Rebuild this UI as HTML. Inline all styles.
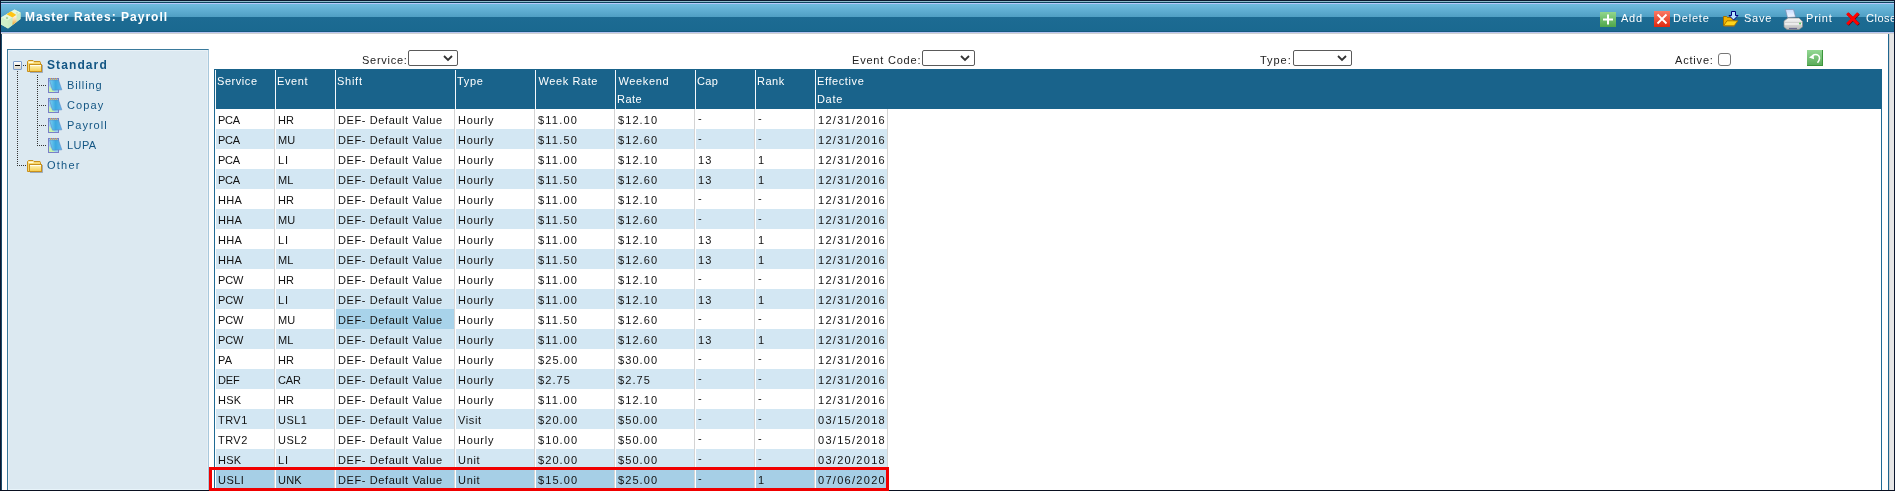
<!DOCTYPE html><html><head><meta charset="utf-8"><style>
*{margin:0;padding:0;box-sizing:border-box}
html,body{width:1895px;height:491px;overflow:hidden;background:#fff;position:relative;font-family:"Liberation Sans",sans-serif}
.a{position:absolute;white-space:nowrap}
#title{left:0;top:0;width:1895px;height:34px;
 background:linear-gradient(to bottom,#0c1830 0,#0c1830 1px,#8cbccc 1px,#8cbccc 2px,#0e4460 2px,#0e4460 3px,#b8c8fc 3px,#b8c8fc 4px,#70bce0 4px,#4f9fc4 17px,#1d6b93 17px,#1a6990 31px,#155a80 31px,#155a80 32px,#b4c4f0 32px,#b4c4f0 33px,#d0d0d0 33px,#d0d0d0 34px)}
#ttl{left:25px;top:10px;font-weight:bold;font-size:12px;letter-spacing:1.0px;color:#fff;line-height:14px}
.tb{top:12px;font-size:11px;color:#fff;line-height:12px}
.lbl{font-size:11px;color:#222;line-height:12px}
.sel{height:16px;border:1px solid #5a5a5a;border-radius:2px;background:#fff}
.tr{font-size:11px;color:#135684;line-height:12px}
.hd{font-size:11px;color:#fff;line-height:12px}
.c{font-size:11px;color:#111;line-height:12px}
.dv{background:repeating-linear-gradient(to bottom,#333 0,#333 1px,transparent 1px,transparent 2px)}
.dh{background:repeating-linear-gradient(to right,#333 0,#333 1px,transparent 1px,transparent 2px)}
</style></head><body>
<div class="a" id="title"></div>
<div class="a" style="left:0;top:0;width:1px;height:491px;background:#0c1830"></div>
<div class="a" style="left:1px;top:34px;width:1px;height:457px;background:#1a4a68"></div>
<div class="a" style="left:1894px;top:0;width:1px;height:491px;background:#0c1830"></div>
<div class="a" style="left:1888px;top:34px;width:1px;height:457px;background:#1f6690"></div>
<div class="a" style="left:1889px;top:34px;width:5px;height:457px;background:#e6e6e6;border-left:1px solid #d0d0d0"></div>
<div class="a" style="left:0;top:490px;width:1895px;height:1px;background:#0a1020"></div>
<svg class="a" style="left:0px;top:8px" width="22" height="22" viewBox="0 0 22 22"><defs><linearGradient id="gm" x1="0" y1="0" x2="0" y2="1"><stop offset="0" stop-color="#fff8f0"/><stop offset="0.5" stop-color="#f8d8a0"/><stop offset="1" stop-color="#e8a020"/></linearGradient></defs>
<path d="M1 9.5 L14.5 1.5 L20.5 4.5 L20.5 11 L8 20.5 L1 16.5Z" fill="#d4f0cc"/>
<path d="M1 9.5 L14.5 1.5 L20.5 4.5 L7.5 12.5Z" fill="#e4f8de"/>
<path d="M1 9.5 L7.5 12.5 L8 20.5 L1 16.5Z" fill="#d0f0c8"/>
<path d="M7.5 12.5 L20.5 4.5 L20.5 11 L8 20.5Z" fill="#ccecc4"/>
<path d="M6.5 6.3 L11 3.6 L16.5 7 L12.5 9.4Z" fill="#ffc414"/>
<path d="M12.5 9.4 L16.5 7 L16.5 14 L12.5 17.1Z" fill="url(#gm)"/>
<circle cx="7" cy="10" r="1.2" fill="#a8d4a0"/>
<circle cx="17" cy="4.8" r="0.9" fill="#c0e0c0"/>
</svg>
<svg class="a" style="left:1600px;top:12px" width="16" height="15" viewBox="0 0 16 15"><defs><linearGradient id="ga" x1="0" y1="0" x2="0" y2="1"><stop offset="0" stop-color="#92d68c"/><stop offset="1" stop-color="#4ea64a"/></linearGradient></defs><rect x="0" y="0" width="16" height="15" fill="url(#ga)"/><rect x="3" y="6.5" width="10" height="2" fill="#fff"/><rect x="7" y="2.5" width="2" height="10" fill="#fff"/></svg>
<svg class="a" style="left:1654px;top:11px" width="16" height="16" viewBox="0 0 16 16"><defs><linearGradient id="gd" x1="0" y1="0" x2="0" y2="1"><stop offset="0" stop-color="#fa7a66"/><stop offset="1" stop-color="#e0280e"/></linearGradient></defs><rect x="0" y="0" width="16" height="16" fill="url(#gd)"/><path d="M3.5 3.5 L12.5 12.5 M12.5 3.5 L3.5 12.5" stroke="#fff" stroke-width="1.8"/></svg>
<svg class="a" style="left:1722px;top:10px" width="18" height="18" viewBox="0 0 18 18"><path d="M1.5 6.5 L4.5 6.5 L5.5 7.5 L11.5 7.5 L11.5 15.5 L1.5 15.5Z" fill="#f0b000" stroke="#a07000" stroke-width="1"/><path d="M1.5 15.8 L5 10.8 L15.8 10.8 L12.2 15.8Z" fill="#ffd41a" stroke="#a07000" stroke-width="0.9"/><path d="M2.5 16.5 L12.5 16.5" stroke="#8a6a40" stroke-opacity="0.6"/><path d="M9.5 1.5 L13.5 1.5 L13.5 5.5 L16 5.5 L11.5 10 L7 5.5 L9.5 5.5 Z" fill="#b8e2ff" stroke="#000080" stroke-width="1"/></svg>
<svg class="a" style="left:1783px;top:8px" width="20" height="22" viewBox="0 0 20 22"><defs><linearGradient id="gp" x1="0" y1="0" x2="0" y2="1"><stop offset="0" stop-color="#fafafa"/><stop offset="1" stop-color="#b8b8b8"/></linearGradient><linearGradient id="gpp" x1="0" y1="0" x2="0" y2="1"><stop offset="0" stop-color="#c8dcff"/><stop offset="1" stop-color="#f4f8ff"/></linearGradient></defs><path d="M2.5 1.5 L10.5 1.5 L12.5 9 L4.5 9.5Z" fill="url(#gpp)" stroke="#8088a8" stroke-width="0.6"/><path d="M1 13 L5 10 L16 10 L19.5 13.5 L19.5 19 L16 21.5 L4 21.5 L1 19Z" fill="url(#gp)" stroke="#8a8a8a" stroke-width="0.7"/><path d="M1.5 14.5 L19 14.5" stroke="#d0d0d0" stroke-width="1"/><path d="M1.5 16 L19 16" stroke="#ffffff" stroke-width="1"/><path d="M6 20.5 L14 20.5" stroke="#6a6a90" stroke-width="1.2"/><circle cx="17" cy="15.5" r="0.9" fill="#40c040"/></svg>
<svg class="a" style="left:1845px;top:11px" width="17" height="17" viewBox="0 0 17 17"><path d="M2.8 2.8 L13.8 13.8 M13.8 2.8 L2.8 13.8" stroke="#500000" stroke-opacity="0.8" stroke-width="3"/><path d="M2.2 2.2 L13.2 13.2 M13.2 2.2 L2.2 13.2" stroke="#ff0000" stroke-width="3"/></svg>
<div class="a" style="left:7px;top:49px;width:202px;height:441px;background:#dce9f1;border-top:1px solid #3a7a9c;border-left:1px solid #3a7a9c;border-right:1px solid #a8c8dc"></div>
<div class="a" style="left:8px;top:50px;width:200px;height:440px;border-top:1px solid #e8f1f7;border-left:1px solid #e8f1f7;border-bottom:1px solid #e8f4fa;border-right:1px solid #e6eef4"></div>
<div class="a dv" style="left:17px;top:71px;width:1px;height:95px"></div>
<div class="a dh" style="left:17px;top:165px;width:10px;height:1px"></div>
<div class="a dh" style="left:23px;top:65px;width:5px;height:1px"></div>
<div class="a dv" style="left:37px;top:75px;width:1px;height:71px"></div>
<div class="a dh" style="left:37px;top:85px;width:10px;height:1px"></div>
<div class="a dh" style="left:37px;top:105px;width:10px;height:1px"></div>
<div class="a dh" style="left:37px;top:125px;width:10px;height:1px"></div>
<div class="a dh" style="left:37px;top:145px;width:10px;height:1px"></div>
<div class="a" style="left:13px;top:61px;width:9px;height:9px;border:1px solid #7b9ccb;border-radius:1px;background:linear-gradient(#fff,#d8d4c8)"></div>
<div class="a" style="left:15px;top:65px;width:5px;height:1px;background:#000"></div>
<svg class="a" style="left:27px;top:59px" width="17" height="15" viewBox="0 0 17 15"><defs><linearGradient id="gf59" x1="0" y1="0" x2="0" y2="1"><stop offset="0" stop-color="#fff8c8"/><stop offset="1" stop-color="#f6cc48"/></linearGradient></defs><path d="M15.5 6 L15.5 13.5 L3 13.5" stroke="#6a7890" stroke-opacity="0.55" fill="none"/><path d="M0.5 2.5 L1.5 1.5 L6 1.5 L7 2.5 L13 2.5 L13.5 3.5 L13.5 12.5 L0.5 12.5 Z" fill="#f8d870" stroke="#c8901c" stroke-width="1"/><rect x="1.5" y="2.5" width="5" height="1.5" fill="#fffbe0"/><rect x="2.5" y="5.5" width="12" height="7" fill="url(#gf59)" stroke="#c8901c" stroke-width="1"/><rect x="3" y="6" width="11" height="1" fill="#fffff0"/></svg>
<svg class="a" style="left:47px;top:77px" width="16" height="17" viewBox="0 0 16 17"><defs><linearGradient id="gb78" x1="0" y1="0" x2="1" y2="0"><stop offset="0" stop-color="#7ad0f0"/><stop offset="0.5" stop-color="#3ca8e0"/><stop offset="1" stop-color="#60b8ec"/></linearGradient></defs><rect x="1.5" y="1.5" width="10" height="14" fill="#9cd4f0" stroke="#7a80c8" stroke-width="1"/><path d="M2 9 L2 15 L8 15Z" fill="#c8f4b0"/><path d="M2.5 3 L11.5 3 L14.8 12.8 L5.5 13.2Z" fill="url(#gb78)" stroke="#5c88c8" stroke-width="0.6"/><rect x="3" y="1" width="1" height="2" fill="#c8a868"/><rect x="5" y="1" width="1" height="2" fill="#c8a868"/><rect x="7" y="1" width="1" height="2" fill="#c8a868"/><rect x="9" y="1" width="1" height="2" fill="#c8a868"/></svg>
<svg class="a" style="left:47px;top:97px" width="16" height="17" viewBox="0 0 16 17"><defs><linearGradient id="gb98" x1="0" y1="0" x2="1" y2="0"><stop offset="0" stop-color="#7ad0f0"/><stop offset="0.5" stop-color="#3ca8e0"/><stop offset="1" stop-color="#60b8ec"/></linearGradient></defs><rect x="1.5" y="1.5" width="10" height="14" fill="#9cd4f0" stroke="#7a80c8" stroke-width="1"/><path d="M2 9 L2 15 L8 15Z" fill="#c8f4b0"/><path d="M2.5 3 L11.5 3 L14.8 12.8 L5.5 13.2Z" fill="url(#gb98)" stroke="#5c88c8" stroke-width="0.6"/><rect x="3" y="1" width="1" height="2" fill="#c8a868"/><rect x="5" y="1" width="1" height="2" fill="#c8a868"/><rect x="7" y="1" width="1" height="2" fill="#c8a868"/><rect x="9" y="1" width="1" height="2" fill="#c8a868"/></svg>
<svg class="a" style="left:47px;top:117px" width="16" height="17" viewBox="0 0 16 17"><defs><linearGradient id="gb118" x1="0" y1="0" x2="1" y2="0"><stop offset="0" stop-color="#7ad0f0"/><stop offset="0.5" stop-color="#3ca8e0"/><stop offset="1" stop-color="#60b8ec"/></linearGradient></defs><rect x="1.5" y="1.5" width="10" height="14" fill="#9cd4f0" stroke="#7a80c8" stroke-width="1"/><path d="M2 9 L2 15 L8 15Z" fill="#c8f4b0"/><path d="M2.5 3 L11.5 3 L14.8 12.8 L5.5 13.2Z" fill="url(#gb118)" stroke="#5c88c8" stroke-width="0.6"/><rect x="3" y="1" width="1" height="2" fill="#c8a868"/><rect x="5" y="1" width="1" height="2" fill="#c8a868"/><rect x="7" y="1" width="1" height="2" fill="#c8a868"/><rect x="9" y="1" width="1" height="2" fill="#c8a868"/></svg>
<svg class="a" style="left:47px;top:137px" width="16" height="17" viewBox="0 0 16 17"><defs><linearGradient id="gb138" x1="0" y1="0" x2="1" y2="0"><stop offset="0" stop-color="#7ad0f0"/><stop offset="0.5" stop-color="#3ca8e0"/><stop offset="1" stop-color="#60b8ec"/></linearGradient></defs><rect x="1.5" y="1.5" width="10" height="14" fill="#9cd4f0" stroke="#7a80c8" stroke-width="1"/><path d="M2 9 L2 15 L8 15Z" fill="#c8f4b0"/><path d="M2.5 3 L11.5 3 L14.8 12.8 L5.5 13.2Z" fill="url(#gb138)" stroke="#5c88c8" stroke-width="0.6"/><rect x="3" y="1" width="1" height="2" fill="#c8a868"/><rect x="5" y="1" width="1" height="2" fill="#c8a868"/><rect x="7" y="1" width="1" height="2" fill="#c8a868"/><rect x="9" y="1" width="1" height="2" fill="#c8a868"/></svg>
<svg class="a" style="left:27px;top:159px" width="17" height="15" viewBox="0 0 17 15"><defs><linearGradient id="gf159" x1="0" y1="0" x2="0" y2="1"><stop offset="0" stop-color="#fff8c8"/><stop offset="1" stop-color="#f6cc48"/></linearGradient></defs><path d="M15.5 6 L15.5 13.5 L3 13.5" stroke="#6a7890" stroke-opacity="0.55" fill="none"/><path d="M0.5 2.5 L1.5 1.5 L6 1.5 L7 2.5 L13 2.5 L13.5 3.5 L13.5 12.5 L0.5 12.5 Z" fill="#f8d870" stroke="#c8901c" stroke-width="1"/><rect x="1.5" y="2.5" width="5" height="1.5" fill="#fffbe0"/><rect x="2.5" y="5.5" width="12" height="7" fill="url(#gf159)" stroke="#c8901c" stroke-width="1"/><rect x="3" y="6" width="11" height="1" fill="#fffff0"/></svg>
<div class="a sel" style="left:408px;top:50px;width:50px"><svg class="a" style="right:4px;top:4px" width="10" height="7" viewBox="0 0 10 7"><path d="M1 1 L5 5 L9 1" stroke="#333" stroke-width="1.8" fill="none"/></svg></div>
<div class="a sel" style="left:922px;top:50px;width:53px"><svg class="a" style="right:4px;top:4px" width="10" height="7" viewBox="0 0 10 7"><path d="M1 1 L5 5 L9 1" stroke="#333" stroke-width="1.8" fill="none"/></svg></div>
<div class="a sel" style="left:1293px;top:50px;width:59px"><svg class="a" style="right:4px;top:4px" width="10" height="7" viewBox="0 0 10 7"><path d="M1 1 L5 5 L9 1" stroke="#333" stroke-width="1.8" fill="none"/></svg></div>
<div class="a" style="left:1718px;top:53px;width:13px;height:13px;border:1px solid #767676;border-radius:3px;background:#fff"></div>
<svg class="a" style="left:1807px;top:50px" width="16" height="16" viewBox="0 0 16 16"><defs><linearGradient id="gr" x1="0" y1="0" x2="0" y2="1"><stop offset="0" stop-color="#94d894"/><stop offset="1" stop-color="#58aa58"/></linearGradient></defs><rect width="16" height="16" fill="url(#gr)"/><path d="M15.5 0 L15.5 16 M0 15.5 L16 15.5" stroke="#3c963c" stroke-width="1"/><path d="M5.5 5.8 Q8.5 3.5 11.5 5.5 Q14 8.5 10.5 12.8" stroke="#fff" stroke-width="1.5" fill="none"/><path d="M2 7.5 L6.5 4.2 L7 9.2Z" fill="#fff"/></svg>
<div class="a" style="left:214px;top:69px;width:1668px;height:421px;border-left:1px solid #1f6a94;border-right:1px solid #1f6a94;background:#fff"></div>
<div class="a" style="left:214px;top:69px;width:1668px;height:40px;background:#19638b"></div>
<div class="a" style="left:215px;top:70px;width:1px;height:39px;background:#f4f8fb"></div>
<div class="a" style="left:275px;top:70px;width:1px;height:39px;background:#f4f8fb"></div>
<div class="a" style="left:335px;top:70px;width:1px;height:39px;background:#f4f8fb"></div>
<div class="a" style="left:455px;top:70px;width:1px;height:39px;background:#f4f8fb"></div>
<div class="a" style="left:535px;top:70px;width:1px;height:39px;background:#f4f8fb"></div>
<div class="a" style="left:615px;top:70px;width:1px;height:39px;background:#f4f8fb"></div>
<div class="a" style="left:695px;top:70px;width:1px;height:39px;background:#f4f8fb"></div>
<div class="a" style="left:755px;top:70px;width:1px;height:39px;background:#f4f8fb"></div>
<div class="a" style="left:815px;top:70px;width:1px;height:39px;background:#f4f8fb"></div>
<div class="a" style="left:216px;top:109px;width:58px;height:20px;background:#ffffff"></div>
<div class="a" style="left:274px;top:109px;width:1px;height:20px;background:#d4d4d4"></div>
<div class="a" style="left:276px;top:109px;width:58px;height:20px;background:#ffffff"></div>
<div class="a" style="left:334px;top:109px;width:1px;height:20px;background:#d4d4d4"></div>
<div class="a" style="left:336px;top:109px;width:118px;height:20px;background:#ffffff"></div>
<div class="a" style="left:454px;top:109px;width:1px;height:20px;background:#d4d4d4"></div>
<div class="a" style="left:456px;top:109px;width:78px;height:20px;background:#ffffff"></div>
<div class="a" style="left:534px;top:109px;width:1px;height:20px;background:#d4d4d4"></div>
<div class="a" style="left:536px;top:109px;width:78px;height:20px;background:#ffffff"></div>
<div class="a" style="left:614px;top:109px;width:1px;height:20px;background:#d4d4d4"></div>
<div class="a" style="left:616px;top:109px;width:78px;height:20px;background:#ffffff"></div>
<div class="a" style="left:694px;top:109px;width:1px;height:20px;background:#d4d4d4"></div>
<div class="a" style="left:696px;top:109px;width:58px;height:20px;background:#ffffff"></div>
<div class="a" style="left:754px;top:109px;width:1px;height:20px;background:#d4d4d4"></div>
<div class="a" style="left:756px;top:109px;width:58px;height:20px;background:#ffffff"></div>
<div class="a" style="left:814px;top:109px;width:1px;height:20px;background:#d4d4d4"></div>
<div class="a" style="left:816px;top:109px;width:71px;height:20px;background:#ffffff"></div>
<div class="a" style="left:887px;top:109px;width:1px;height:20px;background:#d4d4d4"></div>
<div class="a" style="left:216px;top:129px;width:58px;height:20px;background:#d3e7f3"></div>
<div class="a" style="left:274px;top:129px;width:1px;height:20px;background:#d4d4d4"></div>
<div class="a" style="left:276px;top:129px;width:58px;height:20px;background:#d3e7f3"></div>
<div class="a" style="left:334px;top:129px;width:1px;height:20px;background:#d4d4d4"></div>
<div class="a" style="left:336px;top:129px;width:118px;height:20px;background:#d3e7f3"></div>
<div class="a" style="left:454px;top:129px;width:1px;height:20px;background:#d4d4d4"></div>
<div class="a" style="left:456px;top:129px;width:78px;height:20px;background:#d3e7f3"></div>
<div class="a" style="left:534px;top:129px;width:1px;height:20px;background:#d4d4d4"></div>
<div class="a" style="left:536px;top:129px;width:78px;height:20px;background:#d3e7f3"></div>
<div class="a" style="left:614px;top:129px;width:1px;height:20px;background:#d4d4d4"></div>
<div class="a" style="left:616px;top:129px;width:78px;height:20px;background:#d3e7f3"></div>
<div class="a" style="left:694px;top:129px;width:1px;height:20px;background:#d4d4d4"></div>
<div class="a" style="left:696px;top:129px;width:58px;height:20px;background:#d3e7f3"></div>
<div class="a" style="left:754px;top:129px;width:1px;height:20px;background:#d4d4d4"></div>
<div class="a" style="left:756px;top:129px;width:58px;height:20px;background:#d3e7f3"></div>
<div class="a" style="left:814px;top:129px;width:1px;height:20px;background:#d4d4d4"></div>
<div class="a" style="left:816px;top:129px;width:71px;height:20px;background:#d3e7f3"></div>
<div class="a" style="left:887px;top:129px;width:1px;height:20px;background:#d4d4d4"></div>
<div class="a" style="left:216px;top:149px;width:58px;height:20px;background:#ffffff"></div>
<div class="a" style="left:274px;top:149px;width:1px;height:20px;background:#d4d4d4"></div>
<div class="a" style="left:276px;top:149px;width:58px;height:20px;background:#ffffff"></div>
<div class="a" style="left:334px;top:149px;width:1px;height:20px;background:#d4d4d4"></div>
<div class="a" style="left:336px;top:149px;width:118px;height:20px;background:#ffffff"></div>
<div class="a" style="left:454px;top:149px;width:1px;height:20px;background:#d4d4d4"></div>
<div class="a" style="left:456px;top:149px;width:78px;height:20px;background:#ffffff"></div>
<div class="a" style="left:534px;top:149px;width:1px;height:20px;background:#d4d4d4"></div>
<div class="a" style="left:536px;top:149px;width:78px;height:20px;background:#ffffff"></div>
<div class="a" style="left:614px;top:149px;width:1px;height:20px;background:#d4d4d4"></div>
<div class="a" style="left:616px;top:149px;width:78px;height:20px;background:#ffffff"></div>
<div class="a" style="left:694px;top:149px;width:1px;height:20px;background:#d4d4d4"></div>
<div class="a" style="left:696px;top:149px;width:58px;height:20px;background:#ffffff"></div>
<div class="a" style="left:754px;top:149px;width:1px;height:20px;background:#d4d4d4"></div>
<div class="a" style="left:756px;top:149px;width:58px;height:20px;background:#ffffff"></div>
<div class="a" style="left:814px;top:149px;width:1px;height:20px;background:#d4d4d4"></div>
<div class="a" style="left:816px;top:149px;width:71px;height:20px;background:#ffffff"></div>
<div class="a" style="left:887px;top:149px;width:1px;height:20px;background:#d4d4d4"></div>
<div class="a" style="left:216px;top:169px;width:58px;height:20px;background:#d3e7f3"></div>
<div class="a" style="left:274px;top:169px;width:1px;height:20px;background:#d4d4d4"></div>
<div class="a" style="left:276px;top:169px;width:58px;height:20px;background:#d3e7f3"></div>
<div class="a" style="left:334px;top:169px;width:1px;height:20px;background:#d4d4d4"></div>
<div class="a" style="left:336px;top:169px;width:118px;height:20px;background:#d3e7f3"></div>
<div class="a" style="left:454px;top:169px;width:1px;height:20px;background:#d4d4d4"></div>
<div class="a" style="left:456px;top:169px;width:78px;height:20px;background:#d3e7f3"></div>
<div class="a" style="left:534px;top:169px;width:1px;height:20px;background:#d4d4d4"></div>
<div class="a" style="left:536px;top:169px;width:78px;height:20px;background:#d3e7f3"></div>
<div class="a" style="left:614px;top:169px;width:1px;height:20px;background:#d4d4d4"></div>
<div class="a" style="left:616px;top:169px;width:78px;height:20px;background:#d3e7f3"></div>
<div class="a" style="left:694px;top:169px;width:1px;height:20px;background:#d4d4d4"></div>
<div class="a" style="left:696px;top:169px;width:58px;height:20px;background:#d3e7f3"></div>
<div class="a" style="left:754px;top:169px;width:1px;height:20px;background:#d4d4d4"></div>
<div class="a" style="left:756px;top:169px;width:58px;height:20px;background:#d3e7f3"></div>
<div class="a" style="left:814px;top:169px;width:1px;height:20px;background:#d4d4d4"></div>
<div class="a" style="left:816px;top:169px;width:71px;height:20px;background:#d3e7f3"></div>
<div class="a" style="left:887px;top:169px;width:1px;height:20px;background:#d4d4d4"></div>
<div class="a" style="left:216px;top:189px;width:58px;height:20px;background:#ffffff"></div>
<div class="a" style="left:274px;top:189px;width:1px;height:20px;background:#d4d4d4"></div>
<div class="a" style="left:276px;top:189px;width:58px;height:20px;background:#ffffff"></div>
<div class="a" style="left:334px;top:189px;width:1px;height:20px;background:#d4d4d4"></div>
<div class="a" style="left:336px;top:189px;width:118px;height:20px;background:#ffffff"></div>
<div class="a" style="left:454px;top:189px;width:1px;height:20px;background:#d4d4d4"></div>
<div class="a" style="left:456px;top:189px;width:78px;height:20px;background:#ffffff"></div>
<div class="a" style="left:534px;top:189px;width:1px;height:20px;background:#d4d4d4"></div>
<div class="a" style="left:536px;top:189px;width:78px;height:20px;background:#ffffff"></div>
<div class="a" style="left:614px;top:189px;width:1px;height:20px;background:#d4d4d4"></div>
<div class="a" style="left:616px;top:189px;width:78px;height:20px;background:#ffffff"></div>
<div class="a" style="left:694px;top:189px;width:1px;height:20px;background:#d4d4d4"></div>
<div class="a" style="left:696px;top:189px;width:58px;height:20px;background:#ffffff"></div>
<div class="a" style="left:754px;top:189px;width:1px;height:20px;background:#d4d4d4"></div>
<div class="a" style="left:756px;top:189px;width:58px;height:20px;background:#ffffff"></div>
<div class="a" style="left:814px;top:189px;width:1px;height:20px;background:#d4d4d4"></div>
<div class="a" style="left:816px;top:189px;width:71px;height:20px;background:#ffffff"></div>
<div class="a" style="left:887px;top:189px;width:1px;height:20px;background:#d4d4d4"></div>
<div class="a" style="left:216px;top:209px;width:58px;height:20px;background:#d3e7f3"></div>
<div class="a" style="left:274px;top:209px;width:1px;height:20px;background:#d4d4d4"></div>
<div class="a" style="left:276px;top:209px;width:58px;height:20px;background:#d3e7f3"></div>
<div class="a" style="left:334px;top:209px;width:1px;height:20px;background:#d4d4d4"></div>
<div class="a" style="left:336px;top:209px;width:118px;height:20px;background:#d3e7f3"></div>
<div class="a" style="left:454px;top:209px;width:1px;height:20px;background:#d4d4d4"></div>
<div class="a" style="left:456px;top:209px;width:78px;height:20px;background:#d3e7f3"></div>
<div class="a" style="left:534px;top:209px;width:1px;height:20px;background:#d4d4d4"></div>
<div class="a" style="left:536px;top:209px;width:78px;height:20px;background:#d3e7f3"></div>
<div class="a" style="left:614px;top:209px;width:1px;height:20px;background:#d4d4d4"></div>
<div class="a" style="left:616px;top:209px;width:78px;height:20px;background:#d3e7f3"></div>
<div class="a" style="left:694px;top:209px;width:1px;height:20px;background:#d4d4d4"></div>
<div class="a" style="left:696px;top:209px;width:58px;height:20px;background:#d3e7f3"></div>
<div class="a" style="left:754px;top:209px;width:1px;height:20px;background:#d4d4d4"></div>
<div class="a" style="left:756px;top:209px;width:58px;height:20px;background:#d3e7f3"></div>
<div class="a" style="left:814px;top:209px;width:1px;height:20px;background:#d4d4d4"></div>
<div class="a" style="left:816px;top:209px;width:71px;height:20px;background:#d3e7f3"></div>
<div class="a" style="left:887px;top:209px;width:1px;height:20px;background:#d4d4d4"></div>
<div class="a" style="left:216px;top:229px;width:58px;height:20px;background:#ffffff"></div>
<div class="a" style="left:274px;top:229px;width:1px;height:20px;background:#d4d4d4"></div>
<div class="a" style="left:276px;top:229px;width:58px;height:20px;background:#ffffff"></div>
<div class="a" style="left:334px;top:229px;width:1px;height:20px;background:#d4d4d4"></div>
<div class="a" style="left:336px;top:229px;width:118px;height:20px;background:#ffffff"></div>
<div class="a" style="left:454px;top:229px;width:1px;height:20px;background:#d4d4d4"></div>
<div class="a" style="left:456px;top:229px;width:78px;height:20px;background:#ffffff"></div>
<div class="a" style="left:534px;top:229px;width:1px;height:20px;background:#d4d4d4"></div>
<div class="a" style="left:536px;top:229px;width:78px;height:20px;background:#ffffff"></div>
<div class="a" style="left:614px;top:229px;width:1px;height:20px;background:#d4d4d4"></div>
<div class="a" style="left:616px;top:229px;width:78px;height:20px;background:#ffffff"></div>
<div class="a" style="left:694px;top:229px;width:1px;height:20px;background:#d4d4d4"></div>
<div class="a" style="left:696px;top:229px;width:58px;height:20px;background:#ffffff"></div>
<div class="a" style="left:754px;top:229px;width:1px;height:20px;background:#d4d4d4"></div>
<div class="a" style="left:756px;top:229px;width:58px;height:20px;background:#ffffff"></div>
<div class="a" style="left:814px;top:229px;width:1px;height:20px;background:#d4d4d4"></div>
<div class="a" style="left:816px;top:229px;width:71px;height:20px;background:#ffffff"></div>
<div class="a" style="left:887px;top:229px;width:1px;height:20px;background:#d4d4d4"></div>
<div class="a" style="left:216px;top:249px;width:58px;height:20px;background:#d3e7f3"></div>
<div class="a" style="left:274px;top:249px;width:1px;height:20px;background:#d4d4d4"></div>
<div class="a" style="left:276px;top:249px;width:58px;height:20px;background:#d3e7f3"></div>
<div class="a" style="left:334px;top:249px;width:1px;height:20px;background:#d4d4d4"></div>
<div class="a" style="left:336px;top:249px;width:118px;height:20px;background:#d3e7f3"></div>
<div class="a" style="left:454px;top:249px;width:1px;height:20px;background:#d4d4d4"></div>
<div class="a" style="left:456px;top:249px;width:78px;height:20px;background:#d3e7f3"></div>
<div class="a" style="left:534px;top:249px;width:1px;height:20px;background:#d4d4d4"></div>
<div class="a" style="left:536px;top:249px;width:78px;height:20px;background:#d3e7f3"></div>
<div class="a" style="left:614px;top:249px;width:1px;height:20px;background:#d4d4d4"></div>
<div class="a" style="left:616px;top:249px;width:78px;height:20px;background:#d3e7f3"></div>
<div class="a" style="left:694px;top:249px;width:1px;height:20px;background:#d4d4d4"></div>
<div class="a" style="left:696px;top:249px;width:58px;height:20px;background:#d3e7f3"></div>
<div class="a" style="left:754px;top:249px;width:1px;height:20px;background:#d4d4d4"></div>
<div class="a" style="left:756px;top:249px;width:58px;height:20px;background:#d3e7f3"></div>
<div class="a" style="left:814px;top:249px;width:1px;height:20px;background:#d4d4d4"></div>
<div class="a" style="left:816px;top:249px;width:71px;height:20px;background:#d3e7f3"></div>
<div class="a" style="left:887px;top:249px;width:1px;height:20px;background:#d4d4d4"></div>
<div class="a" style="left:216px;top:269px;width:58px;height:20px;background:#ffffff"></div>
<div class="a" style="left:274px;top:269px;width:1px;height:20px;background:#d4d4d4"></div>
<div class="a" style="left:276px;top:269px;width:58px;height:20px;background:#ffffff"></div>
<div class="a" style="left:334px;top:269px;width:1px;height:20px;background:#d4d4d4"></div>
<div class="a" style="left:336px;top:269px;width:118px;height:20px;background:#ffffff"></div>
<div class="a" style="left:454px;top:269px;width:1px;height:20px;background:#d4d4d4"></div>
<div class="a" style="left:456px;top:269px;width:78px;height:20px;background:#ffffff"></div>
<div class="a" style="left:534px;top:269px;width:1px;height:20px;background:#d4d4d4"></div>
<div class="a" style="left:536px;top:269px;width:78px;height:20px;background:#ffffff"></div>
<div class="a" style="left:614px;top:269px;width:1px;height:20px;background:#d4d4d4"></div>
<div class="a" style="left:616px;top:269px;width:78px;height:20px;background:#ffffff"></div>
<div class="a" style="left:694px;top:269px;width:1px;height:20px;background:#d4d4d4"></div>
<div class="a" style="left:696px;top:269px;width:58px;height:20px;background:#ffffff"></div>
<div class="a" style="left:754px;top:269px;width:1px;height:20px;background:#d4d4d4"></div>
<div class="a" style="left:756px;top:269px;width:58px;height:20px;background:#ffffff"></div>
<div class="a" style="left:814px;top:269px;width:1px;height:20px;background:#d4d4d4"></div>
<div class="a" style="left:816px;top:269px;width:71px;height:20px;background:#ffffff"></div>
<div class="a" style="left:887px;top:269px;width:1px;height:20px;background:#d4d4d4"></div>
<div class="a" style="left:216px;top:289px;width:58px;height:20px;background:#d3e7f3"></div>
<div class="a" style="left:274px;top:289px;width:1px;height:20px;background:#d4d4d4"></div>
<div class="a" style="left:276px;top:289px;width:58px;height:20px;background:#d3e7f3"></div>
<div class="a" style="left:334px;top:289px;width:1px;height:20px;background:#d4d4d4"></div>
<div class="a" style="left:336px;top:289px;width:118px;height:20px;background:#d3e7f3"></div>
<div class="a" style="left:454px;top:289px;width:1px;height:20px;background:#d4d4d4"></div>
<div class="a" style="left:456px;top:289px;width:78px;height:20px;background:#d3e7f3"></div>
<div class="a" style="left:534px;top:289px;width:1px;height:20px;background:#d4d4d4"></div>
<div class="a" style="left:536px;top:289px;width:78px;height:20px;background:#d3e7f3"></div>
<div class="a" style="left:614px;top:289px;width:1px;height:20px;background:#d4d4d4"></div>
<div class="a" style="left:616px;top:289px;width:78px;height:20px;background:#d3e7f3"></div>
<div class="a" style="left:694px;top:289px;width:1px;height:20px;background:#d4d4d4"></div>
<div class="a" style="left:696px;top:289px;width:58px;height:20px;background:#d3e7f3"></div>
<div class="a" style="left:754px;top:289px;width:1px;height:20px;background:#d4d4d4"></div>
<div class="a" style="left:756px;top:289px;width:58px;height:20px;background:#d3e7f3"></div>
<div class="a" style="left:814px;top:289px;width:1px;height:20px;background:#d4d4d4"></div>
<div class="a" style="left:816px;top:289px;width:71px;height:20px;background:#d3e7f3"></div>
<div class="a" style="left:887px;top:289px;width:1px;height:20px;background:#d4d4d4"></div>
<div class="a" style="left:216px;top:309px;width:58px;height:20px;background:#ffffff"></div>
<div class="a" style="left:274px;top:309px;width:1px;height:20px;background:#d4d4d4"></div>
<div class="a" style="left:276px;top:309px;width:58px;height:20px;background:#ffffff"></div>
<div class="a" style="left:334px;top:309px;width:1px;height:20px;background:#d4d4d4"></div>
<div class="a" style="left:336px;top:309px;width:118px;height:20px;background:#a8d3ea"></div>
<div class="a" style="left:454px;top:309px;width:1px;height:20px;background:#d4d4d4"></div>
<div class="a" style="left:456px;top:309px;width:78px;height:20px;background:#ffffff"></div>
<div class="a" style="left:534px;top:309px;width:1px;height:20px;background:#d4d4d4"></div>
<div class="a" style="left:536px;top:309px;width:78px;height:20px;background:#ffffff"></div>
<div class="a" style="left:614px;top:309px;width:1px;height:20px;background:#d4d4d4"></div>
<div class="a" style="left:616px;top:309px;width:78px;height:20px;background:#ffffff"></div>
<div class="a" style="left:694px;top:309px;width:1px;height:20px;background:#d4d4d4"></div>
<div class="a" style="left:696px;top:309px;width:58px;height:20px;background:#ffffff"></div>
<div class="a" style="left:754px;top:309px;width:1px;height:20px;background:#d4d4d4"></div>
<div class="a" style="left:756px;top:309px;width:58px;height:20px;background:#ffffff"></div>
<div class="a" style="left:814px;top:309px;width:1px;height:20px;background:#d4d4d4"></div>
<div class="a" style="left:816px;top:309px;width:71px;height:20px;background:#ffffff"></div>
<div class="a" style="left:887px;top:309px;width:1px;height:20px;background:#d4d4d4"></div>
<div class="a" style="left:216px;top:329px;width:58px;height:20px;background:#d3e7f3"></div>
<div class="a" style="left:274px;top:329px;width:1px;height:20px;background:#d4d4d4"></div>
<div class="a" style="left:276px;top:329px;width:58px;height:20px;background:#d3e7f3"></div>
<div class="a" style="left:334px;top:329px;width:1px;height:20px;background:#d4d4d4"></div>
<div class="a" style="left:336px;top:329px;width:118px;height:20px;background:#d3e7f3"></div>
<div class="a" style="left:454px;top:329px;width:1px;height:20px;background:#d4d4d4"></div>
<div class="a" style="left:456px;top:329px;width:78px;height:20px;background:#d3e7f3"></div>
<div class="a" style="left:534px;top:329px;width:1px;height:20px;background:#d4d4d4"></div>
<div class="a" style="left:536px;top:329px;width:78px;height:20px;background:#d3e7f3"></div>
<div class="a" style="left:614px;top:329px;width:1px;height:20px;background:#d4d4d4"></div>
<div class="a" style="left:616px;top:329px;width:78px;height:20px;background:#d3e7f3"></div>
<div class="a" style="left:694px;top:329px;width:1px;height:20px;background:#d4d4d4"></div>
<div class="a" style="left:696px;top:329px;width:58px;height:20px;background:#d3e7f3"></div>
<div class="a" style="left:754px;top:329px;width:1px;height:20px;background:#d4d4d4"></div>
<div class="a" style="left:756px;top:329px;width:58px;height:20px;background:#d3e7f3"></div>
<div class="a" style="left:814px;top:329px;width:1px;height:20px;background:#d4d4d4"></div>
<div class="a" style="left:816px;top:329px;width:71px;height:20px;background:#d3e7f3"></div>
<div class="a" style="left:887px;top:329px;width:1px;height:20px;background:#d4d4d4"></div>
<div class="a" style="left:216px;top:349px;width:58px;height:20px;background:#ffffff"></div>
<div class="a" style="left:274px;top:349px;width:1px;height:20px;background:#d4d4d4"></div>
<div class="a" style="left:276px;top:349px;width:58px;height:20px;background:#ffffff"></div>
<div class="a" style="left:334px;top:349px;width:1px;height:20px;background:#d4d4d4"></div>
<div class="a" style="left:336px;top:349px;width:118px;height:20px;background:#ffffff"></div>
<div class="a" style="left:454px;top:349px;width:1px;height:20px;background:#d4d4d4"></div>
<div class="a" style="left:456px;top:349px;width:78px;height:20px;background:#ffffff"></div>
<div class="a" style="left:534px;top:349px;width:1px;height:20px;background:#d4d4d4"></div>
<div class="a" style="left:536px;top:349px;width:78px;height:20px;background:#ffffff"></div>
<div class="a" style="left:614px;top:349px;width:1px;height:20px;background:#d4d4d4"></div>
<div class="a" style="left:616px;top:349px;width:78px;height:20px;background:#ffffff"></div>
<div class="a" style="left:694px;top:349px;width:1px;height:20px;background:#d4d4d4"></div>
<div class="a" style="left:696px;top:349px;width:58px;height:20px;background:#ffffff"></div>
<div class="a" style="left:754px;top:349px;width:1px;height:20px;background:#d4d4d4"></div>
<div class="a" style="left:756px;top:349px;width:58px;height:20px;background:#ffffff"></div>
<div class="a" style="left:814px;top:349px;width:1px;height:20px;background:#d4d4d4"></div>
<div class="a" style="left:816px;top:349px;width:71px;height:20px;background:#ffffff"></div>
<div class="a" style="left:887px;top:349px;width:1px;height:20px;background:#d4d4d4"></div>
<div class="a" style="left:216px;top:369px;width:58px;height:20px;background:#d3e7f3"></div>
<div class="a" style="left:274px;top:369px;width:1px;height:20px;background:#d4d4d4"></div>
<div class="a" style="left:276px;top:369px;width:58px;height:20px;background:#d3e7f3"></div>
<div class="a" style="left:334px;top:369px;width:1px;height:20px;background:#d4d4d4"></div>
<div class="a" style="left:336px;top:369px;width:118px;height:20px;background:#d3e7f3"></div>
<div class="a" style="left:454px;top:369px;width:1px;height:20px;background:#d4d4d4"></div>
<div class="a" style="left:456px;top:369px;width:78px;height:20px;background:#d3e7f3"></div>
<div class="a" style="left:534px;top:369px;width:1px;height:20px;background:#d4d4d4"></div>
<div class="a" style="left:536px;top:369px;width:78px;height:20px;background:#d3e7f3"></div>
<div class="a" style="left:614px;top:369px;width:1px;height:20px;background:#d4d4d4"></div>
<div class="a" style="left:616px;top:369px;width:78px;height:20px;background:#d3e7f3"></div>
<div class="a" style="left:694px;top:369px;width:1px;height:20px;background:#d4d4d4"></div>
<div class="a" style="left:696px;top:369px;width:58px;height:20px;background:#d3e7f3"></div>
<div class="a" style="left:754px;top:369px;width:1px;height:20px;background:#d4d4d4"></div>
<div class="a" style="left:756px;top:369px;width:58px;height:20px;background:#d3e7f3"></div>
<div class="a" style="left:814px;top:369px;width:1px;height:20px;background:#d4d4d4"></div>
<div class="a" style="left:816px;top:369px;width:71px;height:20px;background:#d3e7f3"></div>
<div class="a" style="left:887px;top:369px;width:1px;height:20px;background:#d4d4d4"></div>
<div class="a" style="left:216px;top:389px;width:58px;height:20px;background:#ffffff"></div>
<div class="a" style="left:274px;top:389px;width:1px;height:20px;background:#d4d4d4"></div>
<div class="a" style="left:276px;top:389px;width:58px;height:20px;background:#ffffff"></div>
<div class="a" style="left:334px;top:389px;width:1px;height:20px;background:#d4d4d4"></div>
<div class="a" style="left:336px;top:389px;width:118px;height:20px;background:#ffffff"></div>
<div class="a" style="left:454px;top:389px;width:1px;height:20px;background:#d4d4d4"></div>
<div class="a" style="left:456px;top:389px;width:78px;height:20px;background:#ffffff"></div>
<div class="a" style="left:534px;top:389px;width:1px;height:20px;background:#d4d4d4"></div>
<div class="a" style="left:536px;top:389px;width:78px;height:20px;background:#ffffff"></div>
<div class="a" style="left:614px;top:389px;width:1px;height:20px;background:#d4d4d4"></div>
<div class="a" style="left:616px;top:389px;width:78px;height:20px;background:#ffffff"></div>
<div class="a" style="left:694px;top:389px;width:1px;height:20px;background:#d4d4d4"></div>
<div class="a" style="left:696px;top:389px;width:58px;height:20px;background:#ffffff"></div>
<div class="a" style="left:754px;top:389px;width:1px;height:20px;background:#d4d4d4"></div>
<div class="a" style="left:756px;top:389px;width:58px;height:20px;background:#ffffff"></div>
<div class="a" style="left:814px;top:389px;width:1px;height:20px;background:#d4d4d4"></div>
<div class="a" style="left:816px;top:389px;width:71px;height:20px;background:#ffffff"></div>
<div class="a" style="left:887px;top:389px;width:1px;height:20px;background:#d4d4d4"></div>
<div class="a" style="left:216px;top:409px;width:58px;height:20px;background:#d3e7f3"></div>
<div class="a" style="left:274px;top:409px;width:1px;height:20px;background:#d4d4d4"></div>
<div class="a" style="left:276px;top:409px;width:58px;height:20px;background:#d3e7f3"></div>
<div class="a" style="left:334px;top:409px;width:1px;height:20px;background:#d4d4d4"></div>
<div class="a" style="left:336px;top:409px;width:118px;height:20px;background:#d3e7f3"></div>
<div class="a" style="left:454px;top:409px;width:1px;height:20px;background:#d4d4d4"></div>
<div class="a" style="left:456px;top:409px;width:78px;height:20px;background:#d3e7f3"></div>
<div class="a" style="left:534px;top:409px;width:1px;height:20px;background:#d4d4d4"></div>
<div class="a" style="left:536px;top:409px;width:78px;height:20px;background:#d3e7f3"></div>
<div class="a" style="left:614px;top:409px;width:1px;height:20px;background:#d4d4d4"></div>
<div class="a" style="left:616px;top:409px;width:78px;height:20px;background:#d3e7f3"></div>
<div class="a" style="left:694px;top:409px;width:1px;height:20px;background:#d4d4d4"></div>
<div class="a" style="left:696px;top:409px;width:58px;height:20px;background:#d3e7f3"></div>
<div class="a" style="left:754px;top:409px;width:1px;height:20px;background:#d4d4d4"></div>
<div class="a" style="left:756px;top:409px;width:58px;height:20px;background:#d3e7f3"></div>
<div class="a" style="left:814px;top:409px;width:1px;height:20px;background:#d4d4d4"></div>
<div class="a" style="left:816px;top:409px;width:71px;height:20px;background:#d3e7f3"></div>
<div class="a" style="left:887px;top:409px;width:1px;height:20px;background:#d4d4d4"></div>
<div class="a" style="left:216px;top:429px;width:58px;height:20px;background:#ffffff"></div>
<div class="a" style="left:274px;top:429px;width:1px;height:20px;background:#d4d4d4"></div>
<div class="a" style="left:276px;top:429px;width:58px;height:20px;background:#ffffff"></div>
<div class="a" style="left:334px;top:429px;width:1px;height:20px;background:#d4d4d4"></div>
<div class="a" style="left:336px;top:429px;width:118px;height:20px;background:#ffffff"></div>
<div class="a" style="left:454px;top:429px;width:1px;height:20px;background:#d4d4d4"></div>
<div class="a" style="left:456px;top:429px;width:78px;height:20px;background:#ffffff"></div>
<div class="a" style="left:534px;top:429px;width:1px;height:20px;background:#d4d4d4"></div>
<div class="a" style="left:536px;top:429px;width:78px;height:20px;background:#ffffff"></div>
<div class="a" style="left:614px;top:429px;width:1px;height:20px;background:#d4d4d4"></div>
<div class="a" style="left:616px;top:429px;width:78px;height:20px;background:#ffffff"></div>
<div class="a" style="left:694px;top:429px;width:1px;height:20px;background:#d4d4d4"></div>
<div class="a" style="left:696px;top:429px;width:58px;height:20px;background:#ffffff"></div>
<div class="a" style="left:754px;top:429px;width:1px;height:20px;background:#d4d4d4"></div>
<div class="a" style="left:756px;top:429px;width:58px;height:20px;background:#ffffff"></div>
<div class="a" style="left:814px;top:429px;width:1px;height:20px;background:#d4d4d4"></div>
<div class="a" style="left:816px;top:429px;width:71px;height:20px;background:#ffffff"></div>
<div class="a" style="left:887px;top:429px;width:1px;height:20px;background:#d4d4d4"></div>
<div class="a" style="left:216px;top:449px;width:58px;height:20px;background:#d3e7f3"></div>
<div class="a" style="left:274px;top:449px;width:1px;height:20px;background:#d4d4d4"></div>
<div class="a" style="left:276px;top:449px;width:58px;height:20px;background:#d3e7f3"></div>
<div class="a" style="left:334px;top:449px;width:1px;height:20px;background:#d4d4d4"></div>
<div class="a" style="left:336px;top:449px;width:118px;height:20px;background:#d3e7f3"></div>
<div class="a" style="left:454px;top:449px;width:1px;height:20px;background:#d4d4d4"></div>
<div class="a" style="left:456px;top:449px;width:78px;height:20px;background:#d3e7f3"></div>
<div class="a" style="left:534px;top:449px;width:1px;height:20px;background:#d4d4d4"></div>
<div class="a" style="left:536px;top:449px;width:78px;height:20px;background:#d3e7f3"></div>
<div class="a" style="left:614px;top:449px;width:1px;height:20px;background:#d4d4d4"></div>
<div class="a" style="left:616px;top:449px;width:78px;height:20px;background:#d3e7f3"></div>
<div class="a" style="left:694px;top:449px;width:1px;height:20px;background:#d4d4d4"></div>
<div class="a" style="left:696px;top:449px;width:58px;height:20px;background:#d3e7f3"></div>
<div class="a" style="left:754px;top:449px;width:1px;height:20px;background:#d4d4d4"></div>
<div class="a" style="left:756px;top:449px;width:58px;height:20px;background:#d3e7f3"></div>
<div class="a" style="left:814px;top:449px;width:1px;height:20px;background:#d4d4d4"></div>
<div class="a" style="left:816px;top:449px;width:71px;height:20px;background:#d3e7f3"></div>
<div class="a" style="left:887px;top:449px;width:1px;height:20px;background:#d4d4d4"></div>
<div class="a" style="left:216px;top:469px;width:58px;height:20px;background:#a6cfe6"></div>
<div class="a" style="left:274px;top:469px;width:1px;height:20px;background:#d4d4d4"></div>
<div class="a" style="left:276px;top:469px;width:58px;height:20px;background:#a6cfe6"></div>
<div class="a" style="left:334px;top:469px;width:1px;height:20px;background:#d4d4d4"></div>
<div class="a" style="left:336px;top:469px;width:118px;height:20px;background:#a6cfe6"></div>
<div class="a" style="left:454px;top:469px;width:1px;height:20px;background:#d4d4d4"></div>
<div class="a" style="left:456px;top:469px;width:78px;height:20px;background:#a6cfe6"></div>
<div class="a" style="left:534px;top:469px;width:1px;height:20px;background:#d4d4d4"></div>
<div class="a" style="left:536px;top:469px;width:78px;height:20px;background:#a6cfe6"></div>
<div class="a" style="left:614px;top:469px;width:1px;height:20px;background:#d4d4d4"></div>
<div class="a" style="left:616px;top:469px;width:78px;height:20px;background:#a6cfe6"></div>
<div class="a" style="left:694px;top:469px;width:1px;height:20px;background:#d4d4d4"></div>
<div class="a" style="left:696px;top:469px;width:58px;height:20px;background:#a6cfe6"></div>
<div class="a" style="left:754px;top:469px;width:1px;height:20px;background:#d4d4d4"></div>
<div class="a" style="left:756px;top:469px;width:58px;height:20px;background:#a6cfe6"></div>
<div class="a" style="left:814px;top:469px;width:1px;height:20px;background:#d4d4d4"></div>
<div class="a" style="left:816px;top:469px;width:71px;height:20px;background:#a6cfe6"></div>
<div class="a" style="left:887px;top:469px;width:1px;height:20px;background:#d4d4d4"></div>
<div class="a" style="left:209px;top:467px;width:680px;height:24px;border:3px solid #f00000"></div>
<div class="a" style="left:0;top:0;width:1895px;height:491px;will-change:transform">
<div class="a" id="ttl">Master Rates: Payroll</div>
<div class="a tb" style="left:1621px;top:12px;letter-spacing:0.75px;">Add</div>
<div class="a tb" style="left:1673px;top:12px;letter-spacing:0.81px;">Delete</div>
<div class="a tb" style="left:1744px;top:12px;letter-spacing:0.73px;">Save</div>
<div class="a tb" style="left:1806px;top:12px;letter-spacing:0.80px;">Print</div>
<div class="a" style="left:1866px;top:0;width:28px;height:34px;overflow:hidden"><div class="a tb" style="left:0px;top:12px;letter-spacing:0.51px;">Close</div></div>
<div class="a tr" style="left:47px;top:59px;font-weight:bold;font-size:12px;letter-spacing:1.1px">Standard</div>
<div class="a tr" style="left:67px;top:79px;letter-spacing:0.88px;">Billing</div>
<div class="a tr" style="left:67px;top:99px;letter-spacing:1.11px;">Copay</div>
<div class="a tr" style="left:67px;top:119px;letter-spacing:1.00px;">Payroll</div>
<div class="a tr" style="left:67px;top:139px;letter-spacing:0.41px;">LUPA</div>
<div class="a tr" style="left:47px;top:159px;letter-spacing:1.24px;">Other</div>
<div class="a lbl" style="left:362px;top:54px;letter-spacing:0.73px;">Service:</div>
<div class="a lbl" style="left:852px;top:54px;letter-spacing:0.79px;">Event Code:</div>
<div class="a lbl" style="left:1260px;top:54px;letter-spacing:0.96px;">Type:</div>
<div class="a lbl" style="left:1675px;top:54px;letter-spacing:0.81px;">Active:</div>
<div class="a hd" style="left:217px;top:75px;letter-spacing:0.56px;">Service</div>
<div class="a hd" style="left:277px;top:75px;letter-spacing:0.63px;">Event</div>
<div class="a hd" style="left:337px;top:75px;letter-spacing:0.74px;">Shift</div>
<div class="a hd" style="left:457px;top:75px;letter-spacing:0.71px;">Type</div>
<div class="a hd" style="left:538.5px;top:75px;letter-spacing:0.59px;">Week Rate</div>
<div class="a hd" style="left:618.5px;top:75px;letter-spacing:0.65px;">Weekend</div>
<div class="a hd" style="left:617px;top:93px;letter-spacing:0.47px;">Rate</div>
<div class="a hd" style="left:697px;top:75px;letter-spacing:0.32px;">Cap</div>
<div class="a hd" style="left:757px;top:75px;letter-spacing:0.51px;">Rank</div>
<div class="a hd" style="left:817px;top:75px;letter-spacing:0.60px;">Effective</div>
<div class="a hd" style="left:817px;top:93px;letter-spacing:0.68px;">Date</div>
<div class="a c" style="left:218px;top:113.5px;letter-spacing:-0.26px;">PCA</div>
<div class="a c" style="left:278px;top:113.5px;letter-spacing:0.01px;">HR</div>
<div class="a c" style="left:338px;top:113.5px;letter-spacing:0.60px;">DEF- Default Value</div>
<div class="a c" style="left:458px;top:113.5px;letter-spacing:0.72px;">Hourly</div>
<div class="a c" style="left:538px;top:113.5px;letter-spacing:1.22px;">$11.00</div>
<div class="a c" style="left:618px;top:113.5px;letter-spacing:1.09px;">$12.10</div>
<div class="a c" style="left:698px;top:111.5px;letter-spacing:1.07px;">-</div>
<div class="a c" style="left:758px;top:111.5px;letter-spacing:1.07px;">-</div>
<div class="a c" style="left:818px;top:113.5px;letter-spacing:1.29px;">12/31/2016</div>
<div class="a c" style="left:218px;top:133.5px;letter-spacing:-0.26px;">PCA</div>
<div class="a c" style="left:278px;top:133.5px;letter-spacing:0.11px;">MU</div>
<div class="a c" style="left:338px;top:133.5px;letter-spacing:0.60px;">DEF- Default Value</div>
<div class="a c" style="left:458px;top:133.5px;letter-spacing:0.72px;">Hourly</div>
<div class="a c" style="left:538px;top:133.5px;letter-spacing:1.22px;">$11.50</div>
<div class="a c" style="left:618px;top:133.5px;letter-spacing:1.09px;">$12.60</div>
<div class="a c" style="left:698px;top:131.5px;letter-spacing:1.07px;">-</div>
<div class="a c" style="left:758px;top:131.5px;letter-spacing:1.07px;">-</div>
<div class="a c" style="left:818px;top:133.5px;letter-spacing:1.29px;">12/31/2016</div>
<div class="a c" style="left:218px;top:153.5px;letter-spacing:-0.26px;">PCA</div>
<div class="a c" style="left:278px;top:153.5px;letter-spacing:0.79px;">LI</div>
<div class="a c" style="left:338px;top:153.5px;letter-spacing:0.60px;">DEF- Default Value</div>
<div class="a c" style="left:458px;top:153.5px;letter-spacing:0.72px;">Hourly</div>
<div class="a c" style="left:538px;top:153.5px;letter-spacing:1.22px;">$11.00</div>
<div class="a c" style="left:618px;top:153.5px;letter-spacing:1.09px;">$12.10</div>
<div class="a c" style="left:698px;top:153.5px;letter-spacing:1.07px;">13</div>
<div class="a c" style="left:758px;top:153.5px;letter-spacing:1.07px;">1</div>
<div class="a c" style="left:818px;top:153.5px;letter-spacing:1.29px;">12/31/2016</div>
<div class="a c" style="left:218px;top:173.5px;letter-spacing:-0.26px;">PCA</div>
<div class="a c" style="left:278px;top:173.5px;letter-spacing:0.06px;">ML</div>
<div class="a c" style="left:338px;top:173.5px;letter-spacing:0.60px;">DEF- Default Value</div>
<div class="a c" style="left:458px;top:173.5px;letter-spacing:0.72px;">Hourly</div>
<div class="a c" style="left:538px;top:173.5px;letter-spacing:1.22px;">$11.50</div>
<div class="a c" style="left:618px;top:173.5px;letter-spacing:1.09px;">$12.60</div>
<div class="a c" style="left:698px;top:173.5px;letter-spacing:1.07px;">13</div>
<div class="a c" style="left:758px;top:173.5px;letter-spacing:1.07px;">1</div>
<div class="a c" style="left:818px;top:173.5px;letter-spacing:1.29px;">12/31/2016</div>
<div class="a c" style="left:218px;top:193.5px;letter-spacing:0.28px;">HHA</div>
<div class="a c" style="left:278px;top:193.5px;letter-spacing:0.01px;">HR</div>
<div class="a c" style="left:338px;top:193.5px;letter-spacing:0.60px;">DEF- Default Value</div>
<div class="a c" style="left:458px;top:193.5px;letter-spacing:0.72px;">Hourly</div>
<div class="a c" style="left:538px;top:193.5px;letter-spacing:1.22px;">$11.00</div>
<div class="a c" style="left:618px;top:193.5px;letter-spacing:1.09px;">$12.10</div>
<div class="a c" style="left:698px;top:191.5px;letter-spacing:1.07px;">-</div>
<div class="a c" style="left:758px;top:191.5px;letter-spacing:1.07px;">-</div>
<div class="a c" style="left:818px;top:193.5px;letter-spacing:1.29px;">12/31/2016</div>
<div class="a c" style="left:218px;top:213.5px;letter-spacing:0.28px;">HHA</div>
<div class="a c" style="left:278px;top:213.5px;letter-spacing:0.11px;">MU</div>
<div class="a c" style="left:338px;top:213.5px;letter-spacing:0.60px;">DEF- Default Value</div>
<div class="a c" style="left:458px;top:213.5px;letter-spacing:0.72px;">Hourly</div>
<div class="a c" style="left:538px;top:213.5px;letter-spacing:1.22px;">$11.50</div>
<div class="a c" style="left:618px;top:213.5px;letter-spacing:1.09px;">$12.60</div>
<div class="a c" style="left:698px;top:211.5px;letter-spacing:1.07px;">-</div>
<div class="a c" style="left:758px;top:211.5px;letter-spacing:1.07px;">-</div>
<div class="a c" style="left:818px;top:213.5px;letter-spacing:1.29px;">12/31/2016</div>
<div class="a c" style="left:218px;top:233.5px;letter-spacing:0.28px;">HHA</div>
<div class="a c" style="left:278px;top:233.5px;letter-spacing:0.79px;">LI</div>
<div class="a c" style="left:338px;top:233.5px;letter-spacing:0.60px;">DEF- Default Value</div>
<div class="a c" style="left:458px;top:233.5px;letter-spacing:0.72px;">Hourly</div>
<div class="a c" style="left:538px;top:233.5px;letter-spacing:1.22px;">$11.00</div>
<div class="a c" style="left:618px;top:233.5px;letter-spacing:1.09px;">$12.10</div>
<div class="a c" style="left:698px;top:233.5px;letter-spacing:1.07px;">13</div>
<div class="a c" style="left:758px;top:233.5px;letter-spacing:1.07px;">1</div>
<div class="a c" style="left:818px;top:233.5px;letter-spacing:1.29px;">12/31/2016</div>
<div class="a c" style="left:218px;top:253.5px;letter-spacing:0.28px;">HHA</div>
<div class="a c" style="left:278px;top:253.5px;letter-spacing:0.06px;">ML</div>
<div class="a c" style="left:338px;top:253.5px;letter-spacing:0.60px;">DEF- Default Value</div>
<div class="a c" style="left:458px;top:253.5px;letter-spacing:0.72px;">Hourly</div>
<div class="a c" style="left:538px;top:253.5px;letter-spacing:1.22px;">$11.50</div>
<div class="a c" style="left:618px;top:253.5px;letter-spacing:1.09px;">$12.60</div>
<div class="a c" style="left:698px;top:253.5px;letter-spacing:1.07px;">13</div>
<div class="a c" style="left:758px;top:253.5px;letter-spacing:1.07px;">1</div>
<div class="a c" style="left:818px;top:253.5px;letter-spacing:1.29px;">12/31/2016</div>
<div class="a c" style="left:218px;top:273.5px;letter-spacing:-0.16px;">PCW</div>
<div class="a c" style="left:278px;top:273.5px;letter-spacing:0.01px;">HR</div>
<div class="a c" style="left:338px;top:273.5px;letter-spacing:0.60px;">DEF- Default Value</div>
<div class="a c" style="left:458px;top:273.5px;letter-spacing:0.72px;">Hourly</div>
<div class="a c" style="left:538px;top:273.5px;letter-spacing:1.22px;">$11.00</div>
<div class="a c" style="left:618px;top:273.5px;letter-spacing:1.09px;">$12.10</div>
<div class="a c" style="left:698px;top:271.5px;letter-spacing:1.07px;">-</div>
<div class="a c" style="left:758px;top:271.5px;letter-spacing:1.07px;">-</div>
<div class="a c" style="left:818px;top:273.5px;letter-spacing:1.29px;">12/31/2016</div>
<div class="a c" style="left:218px;top:293.5px;letter-spacing:-0.16px;">PCW</div>
<div class="a c" style="left:278px;top:293.5px;letter-spacing:0.79px;">LI</div>
<div class="a c" style="left:338px;top:293.5px;letter-spacing:0.60px;">DEF- Default Value</div>
<div class="a c" style="left:458px;top:293.5px;letter-spacing:0.72px;">Hourly</div>
<div class="a c" style="left:538px;top:293.5px;letter-spacing:1.22px;">$11.00</div>
<div class="a c" style="left:618px;top:293.5px;letter-spacing:1.09px;">$12.10</div>
<div class="a c" style="left:698px;top:293.5px;letter-spacing:1.07px;">13</div>
<div class="a c" style="left:758px;top:293.5px;letter-spacing:1.07px;">1</div>
<div class="a c" style="left:818px;top:293.5px;letter-spacing:1.29px;">12/31/2016</div>
<div class="a c" style="left:218px;top:313.5px;letter-spacing:-0.16px;">PCW</div>
<div class="a c" style="left:278px;top:313.5px;letter-spacing:0.11px;">MU</div>
<div class="a c" style="left:338px;top:313.5px;letter-spacing:0.60px;">DEF- Default Value</div>
<div class="a c" style="left:458px;top:313.5px;letter-spacing:0.72px;">Hourly</div>
<div class="a c" style="left:538px;top:313.5px;letter-spacing:1.22px;">$11.50</div>
<div class="a c" style="left:618px;top:313.5px;letter-spacing:1.09px;">$12.60</div>
<div class="a c" style="left:698px;top:311.5px;letter-spacing:1.07px;">-</div>
<div class="a c" style="left:758px;top:311.5px;letter-spacing:1.07px;">-</div>
<div class="a c" style="left:818px;top:313.5px;letter-spacing:1.29px;">12/31/2016</div>
<div class="a c" style="left:218px;top:333.5px;letter-spacing:-0.16px;">PCW</div>
<div class="a c" style="left:278px;top:333.5px;letter-spacing:0.06px;">ML</div>
<div class="a c" style="left:338px;top:333.5px;letter-spacing:0.60px;">DEF- Default Value</div>
<div class="a c" style="left:458px;top:333.5px;letter-spacing:0.72px;">Hourly</div>
<div class="a c" style="left:538px;top:333.5px;letter-spacing:1.22px;">$11.00</div>
<div class="a c" style="left:618px;top:333.5px;letter-spacing:1.09px;">$12.60</div>
<div class="a c" style="left:698px;top:333.5px;letter-spacing:1.07px;">13</div>
<div class="a c" style="left:758px;top:333.5px;letter-spacing:1.07px;">1</div>
<div class="a c" style="left:818px;top:333.5px;letter-spacing:1.29px;">12/31/2016</div>
<div class="a c" style="left:218px;top:353.5px;letter-spacing:0.15px;">PA</div>
<div class="a c" style="left:278px;top:353.5px;letter-spacing:0.01px;">HR</div>
<div class="a c" style="left:338px;top:353.5px;letter-spacing:0.60px;">DEF- Default Value</div>
<div class="a c" style="left:458px;top:353.5px;letter-spacing:0.72px;">Hourly</div>
<div class="a c" style="left:538px;top:353.5px;letter-spacing:1.09px;">$25.00</div>
<div class="a c" style="left:618px;top:353.5px;letter-spacing:1.09px;">$30.00</div>
<div class="a c" style="left:698px;top:351.5px;letter-spacing:1.07px;">-</div>
<div class="a c" style="left:758px;top:351.5px;letter-spacing:1.07px;">-</div>
<div class="a c" style="left:818px;top:353.5px;letter-spacing:1.29px;">12/31/2016</div>
<div class="a c" style="left:218px;top:373.5px;letter-spacing:-0.08px;">DEF</div>
<div class="a c" style="left:278px;top:373.5px;letter-spacing:-0.13px;">CAR</div>
<div class="a c" style="left:338px;top:373.5px;letter-spacing:0.60px;">DEF- Default Value</div>
<div class="a c" style="left:458px;top:373.5px;letter-spacing:0.72px;">Hourly</div>
<div class="a c" style="left:538px;top:373.5px;letter-spacing:1.09px;">$2.75</div>
<div class="a c" style="left:618px;top:373.5px;letter-spacing:1.09px;">$2.75</div>
<div class="a c" style="left:698px;top:371.5px;letter-spacing:1.07px;">-</div>
<div class="a c" style="left:758px;top:371.5px;letter-spacing:1.07px;">-</div>
<div class="a c" style="left:818px;top:373.5px;letter-spacing:1.29px;">12/31/2016</div>
<div class="a c" style="left:218px;top:393.5px;letter-spacing:0.26px;">HSK</div>
<div class="a c" style="left:278px;top:393.5px;letter-spacing:0.01px;">HR</div>
<div class="a c" style="left:338px;top:393.5px;letter-spacing:0.60px;">DEF- Default Value</div>
<div class="a c" style="left:458px;top:393.5px;letter-spacing:0.72px;">Hourly</div>
<div class="a c" style="left:538px;top:393.5px;letter-spacing:1.22px;">$11.00</div>
<div class="a c" style="left:618px;top:393.5px;letter-spacing:1.09px;">$12.10</div>
<div class="a c" style="left:698px;top:391.5px;letter-spacing:1.07px;">-</div>
<div class="a c" style="left:758px;top:391.5px;letter-spacing:1.07px;">-</div>
<div class="a c" style="left:818px;top:393.5px;letter-spacing:1.29px;">12/31/2016</div>
<div class="a c" style="left:218px;top:413.5px;letter-spacing:0.45px;">TRV1</div>
<div class="a c" style="left:278px;top:413.5px;letter-spacing:0.49px;">USL1</div>
<div class="a c" style="left:338px;top:413.5px;letter-spacing:0.60px;">DEF- Default Value</div>
<div class="a c" style="left:458px;top:413.5px;letter-spacing:0.60px;">Visit</div>
<div class="a c" style="left:538px;top:413.5px;letter-spacing:1.09px;">$20.00</div>
<div class="a c" style="left:618px;top:413.5px;letter-spacing:1.09px;">$50.00</div>
<div class="a c" style="left:698px;top:411.5px;letter-spacing:1.07px;">-</div>
<div class="a c" style="left:758px;top:411.5px;letter-spacing:1.07px;">-</div>
<div class="a c" style="left:818px;top:413.5px;letter-spacing:1.29px;">03/15/2018</div>
<div class="a c" style="left:218px;top:433.5px;letter-spacing:0.45px;">TRV2</div>
<div class="a c" style="left:278px;top:433.5px;letter-spacing:0.49px;">USL2</div>
<div class="a c" style="left:338px;top:433.5px;letter-spacing:0.60px;">DEF- Default Value</div>
<div class="a c" style="left:458px;top:433.5px;letter-spacing:0.72px;">Hourly</div>
<div class="a c" style="left:538px;top:433.5px;letter-spacing:1.09px;">$10.00</div>
<div class="a c" style="left:618px;top:433.5px;letter-spacing:1.09px;">$50.00</div>
<div class="a c" style="left:698px;top:431.5px;letter-spacing:1.07px;">-</div>
<div class="a c" style="left:758px;top:431.5px;letter-spacing:1.07px;">-</div>
<div class="a c" style="left:818px;top:433.5px;letter-spacing:1.29px;">03/15/2018</div>
<div class="a c" style="left:218px;top:453.5px;letter-spacing:0.26px;">HSK</div>
<div class="a c" style="left:278px;top:453.5px;letter-spacing:0.79px;">LI</div>
<div class="a c" style="left:338px;top:453.5px;letter-spacing:0.60px;">DEF- Default Value</div>
<div class="a c" style="left:458px;top:453.5px;letter-spacing:0.70px;">Unit</div>
<div class="a c" style="left:538px;top:453.5px;letter-spacing:1.09px;">$20.00</div>
<div class="a c" style="left:618px;top:453.5px;letter-spacing:1.09px;">$50.00</div>
<div class="a c" style="left:698px;top:451.5px;letter-spacing:1.07px;">-</div>
<div class="a c" style="left:758px;top:451.5px;letter-spacing:1.07px;">-</div>
<div class="a c" style="left:818px;top:453.5px;letter-spacing:1.29px;">03/20/2018</div>
<div class="a c" style="left:218px;top:473.5px;letter-spacing:0.47px;">USLI</div>
<div class="a c" style="left:278px;top:473.5px;letter-spacing:0.22px;">UNK</div>
<div class="a c" style="left:338px;top:473.5px;letter-spacing:0.60px;">DEF- Default Value</div>
<div class="a c" style="left:458px;top:473.5px;letter-spacing:0.70px;">Unit</div>
<div class="a c" style="left:538px;top:473.5px;letter-spacing:1.09px;">$15.00</div>
<div class="a c" style="left:618px;top:473.5px;letter-spacing:1.09px;">$25.00</div>
<div class="a c" style="left:698px;top:471.5px;letter-spacing:1.07px;">-</div>
<div class="a c" style="left:758px;top:473.5px;letter-spacing:1.07px;">1</div>
<div class="a c" style="left:818px;top:473.5px;letter-spacing:1.29px;">07/06/2020</div>
</div>
</body></html>
